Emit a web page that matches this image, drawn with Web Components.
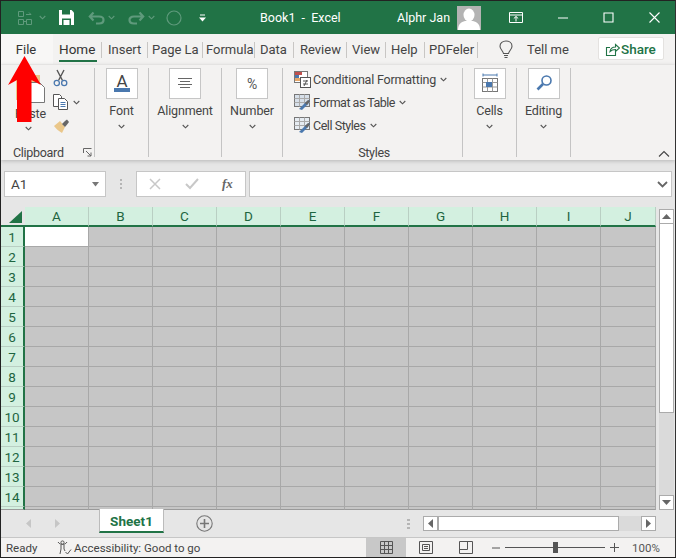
<!DOCTYPE html>
<html>
<head>
<meta charset="utf-8">
<title>Book1 - Excel</title>
<style>
  html, body { margin: 0; padding: 0; background: #e6e6e6; }
  body { width: 676px; height: 558px; overflow: hidden; font-family: Roboto, "Liberation Sans", sans-serif; }
</style>
</head>
<body>
<xl-window>
  <xl-titlebar></xl-titlebar>
  <xl-tabs></xl-tabs>
  <xl-ribbon>
    <xl-clipboard></xl-clipboard>
    <xl-group label="Font" width="54" box="11">
      <svg width="32" height="31" viewBox="0 0 32 31"><text x="16" y="19" text-anchor="middle" font-family="Roboto" font-size="17" fill="#444">A</text><rect x="8" y="20" width="16" height="4" fill="#4a78ae"/></svg>
    </xl-group>
    <xl-group label="Alignment" width="73" box="20">
      <svg width="32" height="31" viewBox="0 0 32 31"><path d="M9 10.500h14M11 13.500h10M9 16.500h14M11 19.500h10" stroke="#666" fill="none"/></svg>
    </xl-group>
    <xl-group label="Number" width="61" box="14">
      <svg width="32" height="31" viewBox="0 0 32 31"><text x="16" y="21" text-anchor="middle" font-family="Roboto" font-size="14" fill="#555">%</text></svg>
    </xl-group>
    <xl-styles></xl-styles>
    <xl-group label="Cells" width="54" box="11">
      <svg width="32" height="31" viewBox="0 0 32 31"><path d="M9 7h14M9 5.500v3M23 5.500v3" stroke="#4a78ae" fill="none"/><rect x="8.500" y="10.500" width="15" height="13" fill="#fff" stroke="#777"/><path d="M8.500 14.500h15M8.500 19h15M13.500 10.500v13M18.500 10.500v13" stroke="#999" fill="none"/><rect x="12" y="14" width="6" height="5" fill="#4a78ae"/></svg>
    </xl-group>
    <xl-group label="Editing" width="54" box="11">
      <svg width="32" height="31" viewBox="0 0 32 31"><circle cx="18.500" cy="12.500" r="4.500" fill="#fff" stroke="#4a78ae" stroke-width="1.600"/><path d="M15 16l-5.500 5.500" stroke="#4a78ae" stroke-width="2.600" fill="none"/></svg>
    </xl-group>
    <svg slot="collapse" width="12" height="8" viewBox="0 0 12 8"><path d="M1 6.500l5-5 5 5" fill="none" stroke="#444" stroke-width="1.100"/></svg>
  </xl-ribbon>
  <xl-formula-bar></xl-formula-bar>
  <xl-sheet-area></xl-sheet-area>
  <xl-sheet-tabs></xl-sheet-tabs>
  <xl-status></xl-status>
  <xl-arrow></xl-arrow>
</xl-window>

<script>
const chevron = (c = '#555') => `<svg width="7" height="5" viewBox="0 0 7 5"><path d="M.7 1l2.800 2.800L6.300 1" fill="none" stroke="${c}" stroke-width="1.100"/></svg>`;

class XlWindow extends HTMLElement {
  constructor() {
    super();
    this.attachShadow({ mode: 'open' }).innerHTML = `
      <style>
        :host {
          display: flex; flex-direction: column; position: relative;
          width: 676px; height: 558px; box-sizing: border-box;
          border: 1px solid #222; border-right-color: #333;
          background: #e6e6e6; overflow: hidden;
          font-family: Roboto, "Liberation Sans", sans-serif; color: #444;
        }
      </style>
      <slot></slot>`;
  }
}

class XlTitlebar extends HTMLElement {
  constructor() {
    super();
    const dim = '#5f9a7c';
    const dimChev = (m) => `<svg style="margin-left:${m}px" width="7" height="5" viewBox="0 0 7 5"><path d="M.7 1l2.800 2.800L6.300 1" fill="none" stroke="${dim}" stroke-width="1.100"/></svg>`;
    this.attachShadow({ mode: 'open' }).innerHTML = `
      <style>
        :host { display: flex; align-items: center; height: 33px; background: #217346; color: #fff; font-size: 12.500px; flex: none; }
        svg { display: block; flex: none; }
        .title { margin-left: 53px; width: 100px; white-space: nowrap; }
        .user { margin-left: 37px; width: 60px; white-space: nowrap; }
      </style>
      <svg style="margin-left:16px" width="16" height="16" viewBox="0 0 16 16"><path d="M1.500 1.500h5v5h-5zM9.500 9.500h5v5h-5zM1.500 9.500h5v5h-5zM9 4.500h5l-2-2M7 11.500h2" fill="none" stroke="${dim}"/></svg>
      ${dimChev(6)}
      <svg style="margin-left:13px" width="15" height="15" viewBox="0 0 15 15"><path d="M0 0h12.500L15 2.500V15H0z" fill="#fff"/><path d="M3 0h8v4.500H3z" fill="#217346"/><path d="M3 8.500h9V15H3z" fill="#217346"/><path d="M4.500 10h6v5h-6z" fill="#fff"/></svg>
      <svg style="margin-left:14px" width="18" height="16" viewBox="0 0 18 16"><path d="M2 6.500h9c6 0 6 7 0 7H8M5.500 2.500L1.800 6.500l3.700 4" fill="none" stroke="${dim}" stroke-width="2.200"/></svg>
      ${dimChev(2)}
      <svg style="margin-left:12px" width="18" height="16" viewBox="0 0 18 16"><path d="M16 6.500H7c-6 0-6 7 0 7h3M12.500 2.500l3.700 4-3.700 4" fill="none" stroke="${dim}" stroke-width="2.200"/></svg>
      ${dimChev(3)}
      <svg style="margin-left:11px" width="16" height="16" viewBox="0 0 16 16"><circle cx="8" cy="8" r="7" fill="none" stroke="${dim}" stroke-width="1.200"/></svg>
      <svg style="margin-left:16px" width="9" height="8" viewBox="0 0 9 8"><path d="M2 1h5" stroke="#fff"/><path d="M1 3.500h7L4.500 7.500z" fill="#fff"/></svg>
      <span class="title">Book1&nbsp; -&nbsp; Excel</span>
      <span class="user">Alphr Jan</span>
      <svg width="24" height="24" viewBox="0 0 24 24"><rect width="24" height="24" fill="#b3b3b3"/><ellipse cx="12" cy="9" rx="5.500" ry="6.500" fill="#fff"/><path d="M1 24c0-6 3-8 7-9h8c4 1 7 3 7 9z" fill="#fff"/></svg>
      <svg style="margin-left:28px" width="14" height="12" viewBox="0 0 14 12"><path d="M.5.500h13v10H.5zM.5 3h13M7 9.500V4.500M4.800 6.500L7 4.500l2.200 2" fill="none" stroke="#fff"/></svg>
      <svg style="margin-left:34px" width="12" height="2" viewBox="0 0 12 2"><path d="M1 1h10" stroke="#fff"/></svg>
      <svg style="margin-left:34px" width="11" height="11" viewBox="0 0 11 11"><path d="M1 1h9v9H1z" fill="none" stroke="#fff" stroke-width="1.100"/></svg>
      <svg style="margin-left:35px" width="11" height="11" viewBox="0 0 11 11"><path d="M.5.500l10 10M10.500.500l-10 10" stroke="#fff" stroke-width="1.100"/></svg>`;
  }
}

class XlTabs extends HTMLElement {
  constructor() {
    super();
    // text, left padding, width up to the next separator
    const tabs = [['Insert', 6, 45], ['Page La', 4, 54], ['Formula', 3, 51], ['Data', 5, 38], ['Review', 6, 52], ['View', 5, 38], ['Help', 5, 38], ['PDFeler', 4, 52]];
    this.attachShadow({ mode: 'open' }).innerHTML = `
      <style>
        :host { display: flex; align-items: stretch; height: 31px; background: #f3f2f1; font-size: 13px; flex: none; position: relative; color: #444; }
        .file { background: #f8f7f6; text-align: center; height: 30px; line-height: 31px; padding-right: 2px; width: 50px; color: #333; }
        .tab { box-sizing: border-box; height: 30px; line-height: 31px; overflow: hidden; white-space: nowrap; flex: none; }
        .sep { width: 1px; height: 16px; margin-top: 8px; background: #c8c6c4; flex: none; }
        .on { position: relative; margin-left: 6px; width: 42px; color: #333; font-size: 13.500px; }
        .on::after { content: ""; position: absolute; left: 0; right: 4px; top: 26px; height: 2px; background: #217346; }
        .share { box-sizing: border-box; margin: 3px 0 0 29px; width: 66px; height: 23px; background: #fff; border: 1px solid #e4e2e0; border-radius: 2px; color: #217346; display: flex; align-items: center; gap: 1px; padding-left: 6px; font-size: 13.500px; font-weight: 500; flex: none; }
        .bulb { margin: 6px 0 0 21px; flex: none; }
        .tell { margin-left: 14px; width: 42px; height: 30px; line-height: 31px; white-space: nowrap; flex: none; }
      </style>
      <div class="file">File</div>
      <div class="tab on">Home</div><div class="sep"></div>
      ${tabs.map(([t, p, w]) => `<div class="tab" style="width:${w}px;padding-left:${p}px">${t}</div><div class="sep"></div>`).join('')}
      <svg class="bulb" width="14" height="19" viewBox="0 0 14 19"><path d="M4.500 13.500C4 10.500 1 9.500 1 6.200 1 3 3.700 1 7 1s6 2 6 5.200c0 3.300-3 4.300-3.500 7.300zM5 15.500h4M5.500 17.500h3" fill="none" stroke="#555" stroke-width="1.100"/></svg>
      <div class="tell">Tell me</div>
      <div class="share">
        <svg width="15" height="14" viewBox="0 0 15 14"><path d="M5 5.500H1.500v8h9V10M5 9.500c.5-3 3-4.500 5.500-4.500V2.500L14.500 6l-4 3.500V7.500C8.500 7.500 6.500 8 5 9.500z" fill="none" stroke="#217346" stroke-width="1.100"/></svg>
        <span>Share</span>
      </div>`;
  }
}

class XlRibbon extends HTMLElement {
  constructor() {
    super();
    this.attachShadow({ mode: 'open' }).innerHTML = `
      <style>
        :host { display: flex; height: 95px; background: #f3f2f1; flex: none; position: relative; box-shadow: 0 1px 4px #b5b5b5; z-index: 1; font-size: 12.500px; letter-spacing: -.15px; }
        .collapse { position: absolute; right: 5px; bottom: 2px; display: block; line-height: 0; }
      </style>
      <slot></slot>
      <div class="collapse"><slot name="collapse"></slot></div>`;
  }
}

// one-button ribbon group: boxed icon, label, chevron
class XlGroup extends HTMLElement {
  constructor() {
    super();
    const label = this.getAttribute('label');
    const box = this.getAttribute('box');
    this.attachShadow({ mode: 'open' }).innerHTML = `
      <style>
        :host { display: block; box-sizing: border-box; width: ${this.getAttribute('width')}px; height: 89px; margin-top: 3px; border-right: 1px solid #c4c4c4; color: #444; flex: none; }
        .box { box-sizing: border-box; width: 32px; height: 31px; margin-left: ${box}px; border: 1px solid #c6c6c6; background: #fff; }
        .box ::slotted(svg) { display: block; margin: -1px; }
        .label { margin-top: 3px; height: 18px; line-height: 18px; text-align: center; white-space: nowrap; }
        .chev { text-align: center; line-height: 5px; margin-top: 2px; }
      </style>
      <div class="box"><slot></slot></div>
      <div class="label">${label}</div>
      <div class="chev">${chevron()}</div>`;
  }
}

class XlClipboard extends HTMLElement {
  constructor() {
    super();
    this.attachShadow({ mode: 'open' }).innerHTML = `
      <style>
        :host { display: grid; box-sizing: border-box; width: 94px; height: 89px; margin-top: 3px; border-right: 1px solid #c4c4c4; grid-template-columns: 43px 50px; grid-template-rows: 77px 12px; color: #444; flex: none; }
        svg { display: block; }
        .paste { padding-left: 14px; box-sizing: border-box; }
        .paste div { width: 30px; text-align: center; margin-top: 2px; height: 16px; line-height: 16px; }
        .paste .chev { width: 26px; height: 5px; margin-top: 4px; }
        .paste .chev svg { margin: 0 auto; }
        .tools { display: flex; flex-direction: column; gap: 6px; padding: 1px 0 0 9px; }
        .tool { display: flex; align-items: center; gap: 5px; height: 18px; }
        .name { grid-column: 1 / 3; display: flex; align-items: center; justify-content: space-between; padding: 0 2px 0 12px; height: 15px; line-height: 15px; letter-spacing: -.3px; }
      </style>
      <div class="paste">
        <svg width="30" height="36" viewBox="0 0 30 36"><path d="M1 7h24v25H1z" fill="#eac78a"/><path d="M15.500 14.500h9l5 5v15h-14z" fill="#fff" stroke="#777"/></svg>
        <div>Paste</div>
        <div class="chev">${chevron()}</div>
      </div>
      <div class="tools">
        <div class="tool"><svg width="15" height="18" viewBox="0 0 15 18"><path d="M4 1l5.500 10.500M11 1L5.500 11.500" stroke="#555" stroke-width="1.400" fill="none"/><circle cx="3.800" cy="14" r="2.600" fill="none" stroke="#4a78ae" stroke-width="1.300"/><circle cx="11.200" cy="14" r="2.600" fill="none" stroke="#4a78ae" stroke-width="1.300"/></svg></div>
        <div class="tool"><svg width="15" height="16" viewBox="0 0 15 16"><path d="M.5.500h6l2 2v10H.5z" fill="#fff" stroke="#555"/><path d="M5.500 4.500h6l3 3v8h-9z" fill="#fff" stroke="#555"/><path d="M7.500 8.500h5M7.500 10.500h5M7.500 12.500h5" stroke="#4a78ae" fill="none"/></svg>${chevron()}</div>
        <div class="tool"><svg width="17" height="15" viewBox="0 0 17 15"><path d="M1 7l6-5 5 6-3 6c-3-2-6-4-8-7z" fill="#eac78a"/><path d="M9 5l3-3 2-1.500 2 2.500-1.500 2L12 8z" fill="#666"/></svg></div>
      </div>
      <div class="name"><span>Clipboard</span>
        <svg width="9" height="9" viewBox="0 0 9 9"><path d="M.5 5V.5H8.500M3 3l5 5M8 4.500V8H4.500" fill="none" stroke="#666"/></svg>
      </div>`;
  }
}

class XlStyles extends HTMLElement {
  constructor() {
    super();
    const tbl = (fill) => `<svg width="17" height="17" viewBox="0 0 17 17"><rect x=".5" y=".5" width="15" height="12" fill="${fill}" stroke="#777"/><path d="M.5 4.500h15M.5 8.500h15M5.500.5v12M10.500.5v12" stroke="#aaa" fill="none"/><path d="M5 15l7-7 3-2 1 1-2 3-6 6z" fill="#4a78ae"/><path d="M11 9l3-3 2 1-3 4z" fill="#666"/></svg>`;
    const cond = `<svg width="17" height="17" viewBox="0 0 17 17"><rect x=".5" y=".5" width="13" height="11" fill="#fff" stroke="#777"/><rect x="1" y="1" width="7" height="3" fill="#c0504d"/><rect x="1" y="4" width="4" height="3" fill="#4a78ae"/><rect x="1" y="7" width="6" height="3" fill="#e6a76a"/><rect x="6.500" y="6.500" width="10" height="10" fill="#fff" stroke="#555"/><path d="M9 10h5M9 13h5M10 15l3-6" stroke="#444" stroke-width=".9" fill="none"/></svg>`;
    const row = (icon, t, ls) => `<div class="row">${icon}<span style="letter-spacing:${ls}px">${t}</span>${chevron()}</div>`;
    this.attachShadow({ mode: 'open' }).innerHTML = `
      <style>
        :host { display: flex; flex-direction: column; box-sizing: border-box; width: 180px; height: 89px; margin-top: 3px; border-right: 1px solid #c4c4c4; padding-left: 11px; color: #444; flex: none; }
        .rows { display: flex; flex-direction: column; gap: 5px; height: 77px; padding-top: 2px; box-sizing: border-box; flex: none; }
        .row { display: flex; align-items: center; height: 18px; white-space: nowrap; }
        .row svg:first-child { margin-right: 2px; }
        .row svg:last-child { margin-left: 4px; }
        .name { text-align: center; line-height: 15px; height: 12px; padding-right: 8px; letter-spacing: -.3px; }
      </style>
      <div class="rows">
        ${row(cond, 'Conditional Formatting', -.2)}
        ${row(tbl('#d6dfe9'), 'Format as Table', -.5)}
        ${row(tbl('#e6ecf2'), 'Cell Styles', -.45)}
      </div>
      <div class="name">Styles</div>`;
  }
}

class XlFormulaBar extends HTMLElement {
  constructor() {
    super();
    this.attachShadow({ mode: 'open' }).innerHTML = `
      <style>
        :host { display: flex; box-sizing: border-box; height: 47px; padding: 11px 3px 0 3px; background: #e6e6e6; font-size: 13.500px; color: #444; flex: none; }
        .field { box-sizing: border-box; height: 26px; background: #fff; border: 1px solid #c6c6c6; display: flex; align-items: center; flex: none; }
        .name { width: 102px; padding: 0 5px 0 6px; justify-content: space-between; }
        .dots { width: 30px; display: flex; flex-direction: column; align-items: center; justify-content: center; gap: 2px; height: 26px; flex: none; }
        .dots i { display: block; width: 2px; height: 2px; background: #b5b5b5; }
        .fx { width: 110px; padding-left: 12px; }
        .input { width: 423px; margin-left: 3px; justify-content: flex-end; padding-right: 3px; }
        svg { display: block; flex: none; }
        .f { font-family: "Liberation Serif", serif; font-style: italic; font-weight: 700; font-size: 13px; color: #666; margin-left: 23px; }
      </style>
      <div class="field name"><span>A1</span><svg width="9" height="5" viewBox="0 0 9 5"><path d="M1 0h7L4.500 4.500z" fill="#777"/></svg></div>
      <div class="dots"><i></i><i></i><i></i></div>
      <div class="field fx">
        <svg width="12" height="12" viewBox="0 0 12 12"><path d="M1 1l10 10M11 1L1 11" stroke="#c8c8c8" stroke-width="1.500"/></svg>
        <svg style="margin-left:24px" width="14" height="12" viewBox="0 0 14 12"><path d="M1 6l4 4 8-9" fill="none" stroke="#c8c8c8" stroke-width="2"/></svg>
        <span class="f">fx</span>
      </div>
      <div class="field input"><svg width="11" height="7" viewBox="0 0 11 7"><path d="M1 1l4.500 4.500L10 1" fill="none" stroke="#666" stroke-width="1.800"/></svg></div>`;
  }
}

class XlSheetArea extends HTMLElement {
  constructor() {
    super();
    const cols = 'ABCDEFGHIJ'.split('');
    let cells = `<div class="corner"><svg width="13" height="12" viewBox="0 0 13 12"><path d="M13 0v12H0z" fill="#217346"/></svg></div>`;
    cols.forEach(c => cells += `<div class="ch">${c}</div>`);
    for (let r = 1; r <= 14; r++) {
      cells += `<div class="rh">${r}</div>`;
      cols.forEach((c, i) => cells += `<div class="c${r === 1 && i === 0 ? ' sel' : ''}"></div>`);
    }
    cells += `<div class="rh tail"></div>`;
    cols.forEach(() => cells += `<div class="c tail"></div>`);
    this.attachShadow({ mode: 'open' }).innerHTML = `
      <style>
        :host { display: flex; height: 303px; background: #e6e6e6; flex: none; font-size: 13.500px; }
        .grid { display: grid; width: 655px; height: 303px; grid-template-columns: 24px repeat(9, 64px) 55px; grid-template-rows: 20px repeat(14, 20px) 3px; flex: none; }
        .corner { background: #e6e6e6; display: flex; justify-content: flex-end; align-items: flex-end; padding: 0 3px 2px 0; box-sizing: border-box; border-bottom: 2px solid #217346; }
        .corner svg { display: block; }
        .ch { box-sizing: border-box; background: #d3f0e0; color: #1e6540; border-right: 1px solid #b9cfc3; border-bottom: 2px solid #217346; text-align: center; line-height: 19px; }
        .rh { box-sizing: border-box; background: #d3f0e0; color: #1e6540; border-right: 2px solid #217346; border-bottom: 1px solid #b9cfc3; text-align: center; line-height: 20px; }
        .c { box-sizing: border-box; background: #c6c6c6; border-right: 1px solid #a8a8a8; border-bottom: 1px solid #a8a8a8; }
        .sel { background: #fff; }
        .tail { border-bottom: 1px solid #9a9a9a; }
        .bar { width: 18px; display: flex; flex-direction: column; padding: 2px 0 0 3px; box-sizing: border-box; }
        .btn { box-sizing: border-box; width: 15px; height: 15px; flex: none; background: #fff; border: 1px solid #ababab; display: flex; align-items: center; justify-content: center; }
        .thumb { box-sizing: border-box; width: 15px; height: 189px; flex: none; background: #fff; border: 1px solid #ababab; border-top: 0; }
        .track { width: 15px; flex: 1; background: #dadada; }
      </style>
      <div class="grid">${cells}</div>
      <div class="bar">
        <div class="btn"><svg width="9" height="5" viewBox="0 0 9 5"><path d="M0 5h9L4.500 0z" fill="#666"/></svg></div>
        <div class="thumb"></div>
        <div class="track"></div>
        <div class="btn"><svg width="9" height="5" viewBox="0 0 9 5"><path d="M0 0h9L4.500 5z" fill="#666"/></svg></div>
      </div>`;
  }
}

class XlSheetTabs extends HTMLElement {
  constructor() {
    super();
    this.attachShadow({ mode: 'open' }).innerHTML = `
      <style>
        :host { display: flex; height: 27px; background: #e6e6e6; flex: none; font-size: 13.500px; position: relative; }
        svg { display: block; flex: none; }
        .tab { box-sizing: border-box; width: 65px; height: 24px; margin: -1px 0 0 39px; background: #fff; border-left: 1px solid #bbb; border-right: 1px solid #bbb; border-bottom: 2px solid #217346; color: #217346; font-weight: 700; text-align: center; line-height: 24px; flex: none; position: relative; }
        .nav { display: flex; align-items: center; height: 27px; flex: none; }
        .dots { margin-left: 194px; display: flex; flex-direction: column; gap: 2px; justify-content: center; height: 27px; width: 3px; flex: none; }
        .dots i { display: block; width: 3px; height: 2px; background: #b5b5b5; }
        .sb { display: flex; margin: 6px 0 0 13px; height: 15px; flex: none; }
        .btn { box-sizing: border-box; width: 15px; height: 15px; background: #fff; border: 1px solid #ababab; display: flex; align-items: center; justify-content: center; }
        .thumb { box-sizing: border-box; width: 181px; height: 15px; background: #fff; border: 1px solid #ababab; }
        .track { width: 22px; height: 15px; background: #dadada; }
      </style>
      <div class="nav">
        <svg style="margin-left:25px" width="5" height="9" viewBox="0 0 5 9"><path d="M5 0v9L0 4.500z" fill="#c6c6c6"/></svg>
        <svg style="margin-left:24px" width="5" height="9" viewBox="0 0 5 9"><path d="M0 0v9l5-4.500z" fill="#c6c6c6"/></svg>
      </div>
      <div class="tab">Sheet1</div>
      <div class="nav"><svg style="margin-left:32px" width="17" height="17" viewBox="0 0 17 17"><circle cx="8.500" cy="8.500" r="7.700" fill="none" stroke="#777" stroke-width="1.100"/><path d="M8.500 4v9M4 8.500h9" stroke="#777" stroke-width="1.600"/></svg></div>
      <div class="dots"><i></i><i></i><i></i></div>
      <div class="sb">
        <div class="btn"><svg width="5" height="9" viewBox="0 0 5 9"><path d="M5 0v9L0 4.500z" fill="#666"/></svg></div>
        <div class="thumb"></div>
        <div class="track"></div>
        <div class="btn"><svg width="5" height="9" viewBox="0 0 5 9"><path d="M0 0v9l5-4.500z" fill="#666"/></svg></div>
      </div>`;
  }
}

class XlStatus extends HTMLElement {
  constructor() {
    super();
    this.attachShadow({ mode: 'open' }).innerHTML = `
      <style>
        :host { display: flex; align-items: center; box-sizing: border-box; height: 20px; background: #f3f2f1; border-top: 1px solid #c6c6c6; font-size: 11.500px; color: #444; flex: none; white-space: nowrap; }
        svg { display: block; flex: none; }
        .ready { margin-left: 5px; width: 51px; flex: none; }
        .acc { width: 292px; margin-left: 2px; flex: none; }
        .normal { width: 40px; height: 19px; background: #c8c8c8; display: flex; align-items: center; justify-content: center; flex: none; }
        .slider { position: relative; width: 100px; height: 1px; background: #555; margin-left: 5px; flex: none; }
        .slider i { position: absolute; left: 48px; top: -5px; width: 5px; height: 11px; background: #555; }
        .zoom { margin-left: 13px; color: #555; flex: none; }
      </style>
      <span class="ready">Ready</span>
      <svg width="15" height="15" viewBox="0 0 15 15"><circle cx="5.500" cy="2.500" r="1.600" fill="none" stroke="#555"/><path d="M1 2c1 1.500 2.500 2.500 4.500 2.500S9 3.500 10 2M4 5v4l-1 5M7 5v4l1 2M8.500 12l2 2L14 9.500" fill="none" stroke="#555"/></svg>
      <span class="acc">Accessibility: Good to go</span>
      <div class="normal"><svg width="13" height="13" viewBox="0 0 13 13"><path d="M.5.500h12v12H.5zM.5 4.500h12M.5 8.500h12M4.500.5v12M8.500.5v12" fill="none" stroke="#555"/></svg></div>
      <svg style="margin-left:13px" width="14" height="13" viewBox="0 0 14 13"><path d="M.5.500h13v12H.5z" fill="none" stroke="#555"/><path d="M3.500 3.500h7v6h-7zM5 5.500h4M5 7.500h4" fill="none" stroke="#555"/></svg>
      <svg style="margin-left:26px" width="14" height="13" viewBox="0 0 14 13"><path d="M.5.500h13v12H.5zM.5 8.500h8V.5" fill="none" stroke="#555"/></svg>
      <svg style="margin-left:19px" width="8" height="2" viewBox="0 0 8 2"><path d="M0 1h8" stroke="#555"/></svg>
      <div class="slider"><i></i></div>
      <svg style="margin-left:5px" width="9" height="9" viewBox="0 0 9 9"><path d="M0 4.500h9M4.500 0v9" stroke="#555"/></svg>
      <span class="zoom">100%</span>`;
  }
}

// the red callout pointing at File lies over the ribbon
class XlArrow extends HTMLElement {
  constructor() {
    super();
    this.attachShadow({ mode: 'open' }).innerHTML = `
      <style>
        :host { display: block; position: absolute; left: 6px; top: 54px; width: 36px; height: 70px; z-index: 5; }
        svg { display: block; }
      </style>
      <svg width="36" height="70" viewBox="0 0 36 70"><path d="M17.500 1L34 30l-9.500-5V67H10V25L1 30z" fill="#f00"/></svg>`;
  }
}

customElements.define('xl-window', XlWindow);
customElements.define('xl-titlebar', XlTitlebar);
customElements.define('xl-tabs', XlTabs);
customElements.define('xl-ribbon', XlRibbon);
customElements.define('xl-group', XlGroup);
customElements.define('xl-clipboard', XlClipboard);
customElements.define('xl-styles', XlStyles);
customElements.define('xl-formula-bar', XlFormulaBar);
customElements.define('xl-sheet-area', XlSheetArea);
customElements.define('xl-sheet-tabs', XlSheetTabs);
customElements.define('xl-status', XlStatus);
customElements.define('xl-arrow', XlArrow);
</script>
</body>
</html>
